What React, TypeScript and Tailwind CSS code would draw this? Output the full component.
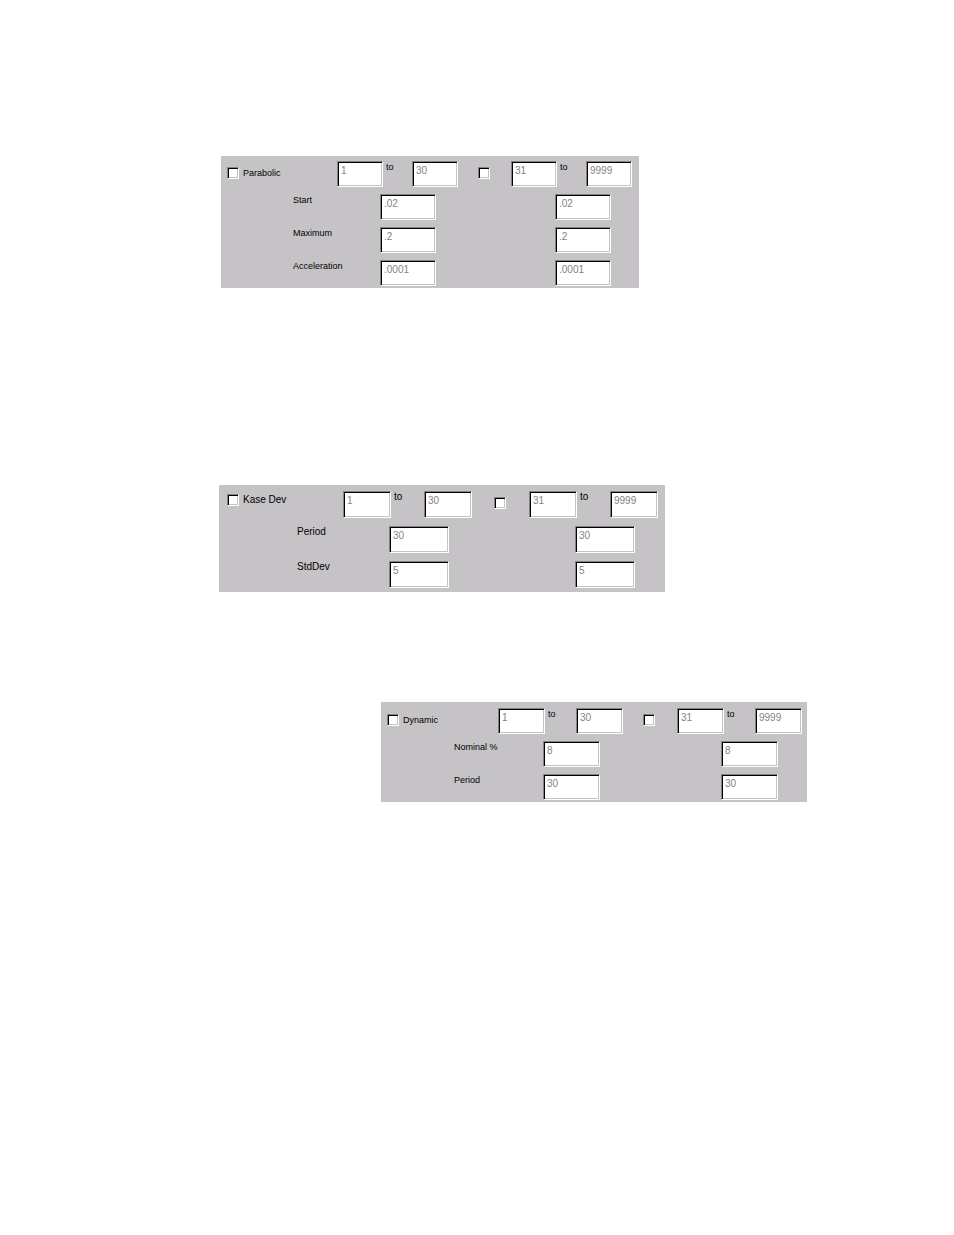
import { useId, useState } from "react";

type Layout = {
  panel: string;
  lead: string;
  box: string;
  to: string;
  toggle: string;
  param: string;
  label: string;
  spacer: string;
};

type Props = {
  title: string;
  params: { label: string; value: string }[];
  layout: Layout;
};

const bevel =
  "rounded-none border border-t-[#848284] border-l-[#848284] border-r-white border-b-white bg-white shadow-[inset_1px_1px_0_#000,inset_-1px_-1px_0_#c6c3c6]";

function Toggle({
  id,
  label,
  checked,
  onChange,
}: {
  id?: string;
  label?: string;
  checked: boolean;
  onChange: (checked: boolean) => void;
}) {
  return (
    <input
      type="checkbox"
      id={id}
      aria-label={label}
      checked={checked}
      onChange={(e) => onChange(e.target.checked)}
      className={`h-3 w-3 shrink-0 appearance-none checked:bg-gray-700 ${bevel}`}
    />
  );
}

function Field({ label, value, className, disabled }: { label: string; value: string; className: string; disabled: boolean }) {
  return (
    <input
      type="text"
      aria-label={label}
      defaultValue={value}
      disabled={disabled}
      className={`shrink-0 pb-2 pl-[3px] text-[10px] disabled:text-[#848284] ${bevel} ${className}`}
    />
  );
}

function StopPanel({ title, params, layout }: Props) {
  const id = useId();
  const [first, setFirst] = useState(false);
  const [second, setSecond] = useState(false);

  return (
    <fieldset
      className={`flex w-fit flex-col bg-[#c6c3c6] font-['Liberation_Sans',Arial,sans-serif] leading-3 text-black ${layout.panel}`}
    >
      <div className="flex items-start">
        <div className={`flex shrink-0 items-center gap-1 ${layout.lead}`}>
          <Toggle id={id} checked={first} onChange={setFirst} />
          <label htmlFor={id}>{title}</label>
        </div>
        <Field label={`${title} first range from`} value="1" disabled={!first} className={layout.box} />
        <span className={`shrink-0 pl-[3px] ${layout.to}`}>to</span>
        <Field label={`${title} first range to`} value="30" disabled={!first} className={layout.box} />
        <div className={`flex shrink-0 pt-1.5 ${layout.toggle}`}>
          <Toggle label={`${title} second range`} checked={second} onChange={setSecond} />
        </div>
        <Field label={`${title} second range from`} value="31" disabled={!second} className={layout.box} />
        <span className={`shrink-0 pl-[3px] ${layout.to}`}>to</span>
        <Field label={`${title} second range to`} value="9999" disabled={!second} className={layout.box} />
      </div>

      {params.map((p) => (
        <div key={p.label} className="flex items-start">
          <span className={`shrink-0 ${layout.label}`}>{p.label}</span>
          <Field label={`${p.label}, first range`} value={p.value} disabled={!first} className={layout.param} />
          <span className={`shrink-0 ${layout.spacer}`} />
          <Field label={`${p.label}, second range`} value={p.value} disabled={!second} className={layout.param} />
        </div>
      ))}
    </fieldset>
  );
}

const parabolic: Layout = {
  panel: "ml-[221px] gap-[7px] pt-[5px] pr-[7px] pb-[2px] text-[9px]",
  lead: "w-[116px] pt-1.5 pl-1.5",
  box: "h-[26px] w-[46px]",
  to: "w-[29px]",
  toggle: "w-[53px] pl-5",
  param: "h-[26px] w-[56px]",
  label: "w-[159px] pl-[72px]",
  spacer: "w-[119px]",
};

const kaseDev: Layout = {
  panel: "mt-[197px] ml-[219px] gap-2 pt-1.5 pr-[7px] pb-[4px] text-[10px]",
  lead: "w-[124px] pt-[3px] pl-2",
  box: "h-[27px] w-[48px]",
  to: "w-[33px]",
  toggle: "w-[57px] pl-[22px]",
  param: "h-[27px] w-[60px]",
  label: "w-[170px] pl-[78px]",
  spacer: "w-[126px]",
};

const dynamic: Layout = {
  panel: "mt-[110px] ml-[381px] gap-[7px] pt-1.5 pr-[5px] pb-[2px] text-[9px]",
  lead: "w-[117px] pt-1.5 pl-1.5",
  box: "h-[26px] w-[47px]",
  to: "w-[31px]",
  toggle: "w-[54px] pl-5",
  param: "h-[26px] w-[57px]",
  label: "w-[162px] pl-[73px]",
  spacer: "w-[121px]",
};

export default function App() {
  return (
    <main className="min-h-screen bg-white pt-[156px]">
      <StopPanel
        title="Parabolic"
        layout={parabolic}
        params={[
          { label: "Start", value: ".02" },
          { label: "Maximum", value: ".2" },
          { label: "Acceleration", value: ".0001" },
        ]}
      />
      <StopPanel
        title="Kase Dev"
        layout={kaseDev}
        params={[
          { label: "Period", value: "30" },
          { label: "StdDev", value: "5" },
        ]}
      />
      <StopPanel
        title="Dynamic"
        layout={dynamic}
        params={[
          { label: "Nominal %", value: "8" },
          { label: "Period", value: "30" },
        ]}
      />
    </main>
  );
}
